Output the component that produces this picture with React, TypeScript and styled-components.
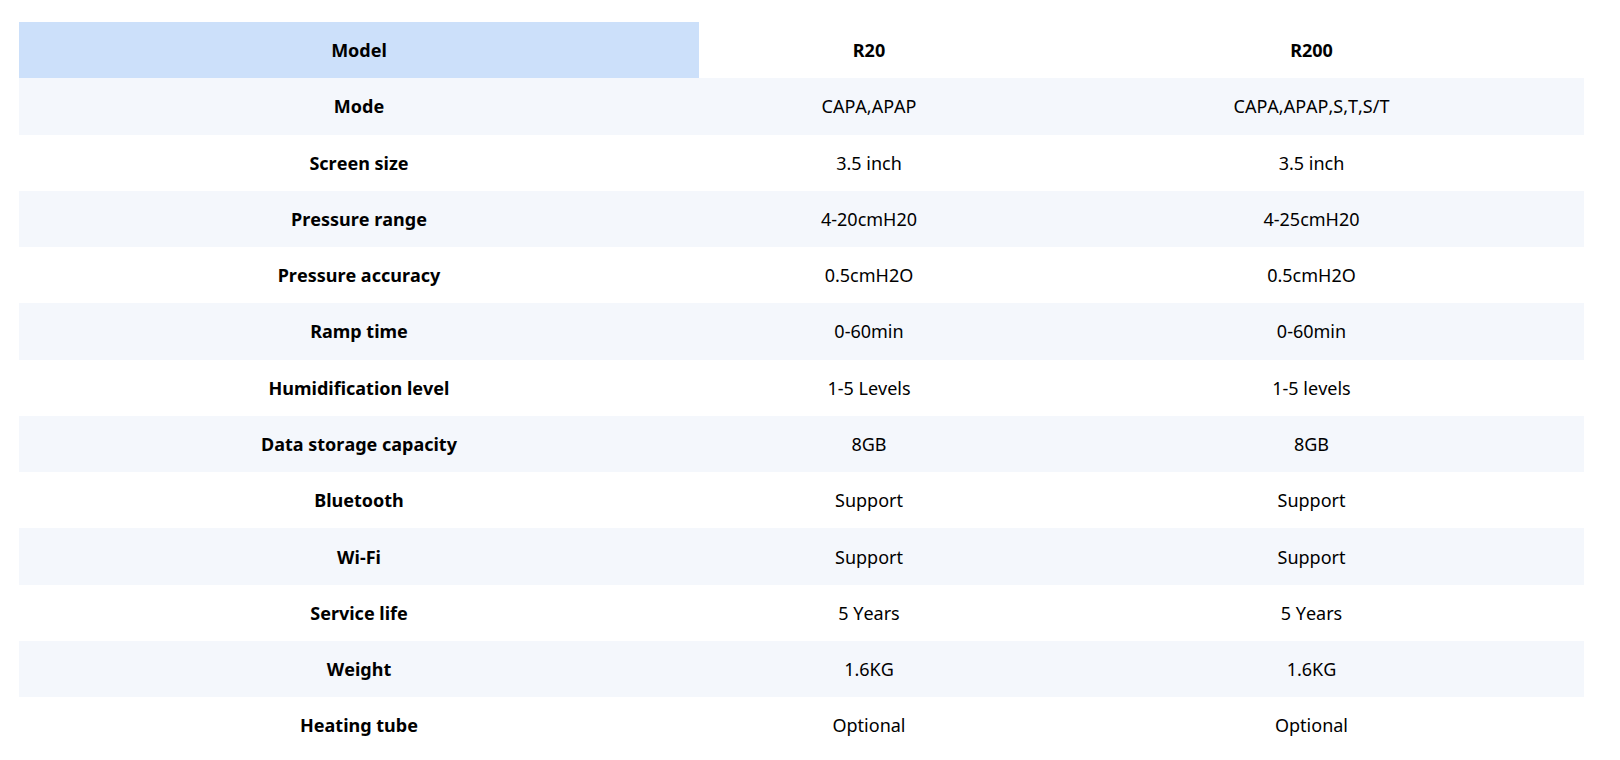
import React from "react";
import styled, { createGlobalStyle } from "styled-components";

const Global = createGlobalStyle`
  html, body { margin: 0; padding: 0; background: #ffffff; }
  body { font-family: "Noto Sans", "Open Sans", sans-serif; color: #000; }
`;

const Page = styled.div`
  padding: 22px 36px 0 19px;
`;

const Table = styled.div`
  display: grid;
  grid-template-columns: 680px 340px 545px;
  width: 1565px;
`;

const Row = styled.div<{ $striped?: boolean }>`
  display: contents;
  & > div {
    background: ${(p) => (p.$striped ? "#f4f7fc" : "#ffffff")};
  }
`;

const Cell = styled.div<{ $bold?: boolean; $head?: boolean }>`
  height: 56.27px;
  display: flex;
  align-items: center;
  justify-content: center;
  font-size: 18px;
  font-kerning: none;
  font-weight: ${(p) => (p.$bold ? 700 : 400)};
  ${(p) => (p.$head ? "background: #cce0fa !important;" : "")}
`;

const rows: [string, string, string][] = [
  ["Mode", "CAPA,APAP", "CAPA,APAP,S,T,S/T"],
  ["Screen size", "3.5 inch", "3.5 inch"],
  ["Pressure range", "4-20cmH20", "4-25cmH20"],
  ["Pressure accuracy", "0.5cmH2O", "0.5cmH2O"],
  ["Ramp time", "0-60min", "0-60min"],
  ["Humidification level", "1-5 Levels", "1-5 levels"],
  ["Data storage capacity", "8GB", "8GB"],
  ["Bluetooth", "Support", "Support"],
  ["Wi-Fi", "Support", "Support"],
  ["Service life", "5 Years", "5 Years"],
  ["Weight", "1.6KG", "1.6KG"],
  ["Heating tube", "Optional", "Optional"],
];

export default function App() {
  return (
    <>
      <Global />
      <Page>
        <Table>
          <Row>
            <Cell $bold $head>Model</Cell>
            <Cell $bold>R20</Cell>
            <Cell $bold>R200</Cell>
          </Row>
          {rows.map((r, i) => (
            <Row key={r[0]} $striped={i % 2 === 0}>
              <Cell $bold>{r[0]}</Cell>
              <Cell>{r[1]}</Cell>
              <Cell>{r[2]}</Cell>
            </Row>
          ))}
        </Table>
      </Page>
    </>
  );
}
